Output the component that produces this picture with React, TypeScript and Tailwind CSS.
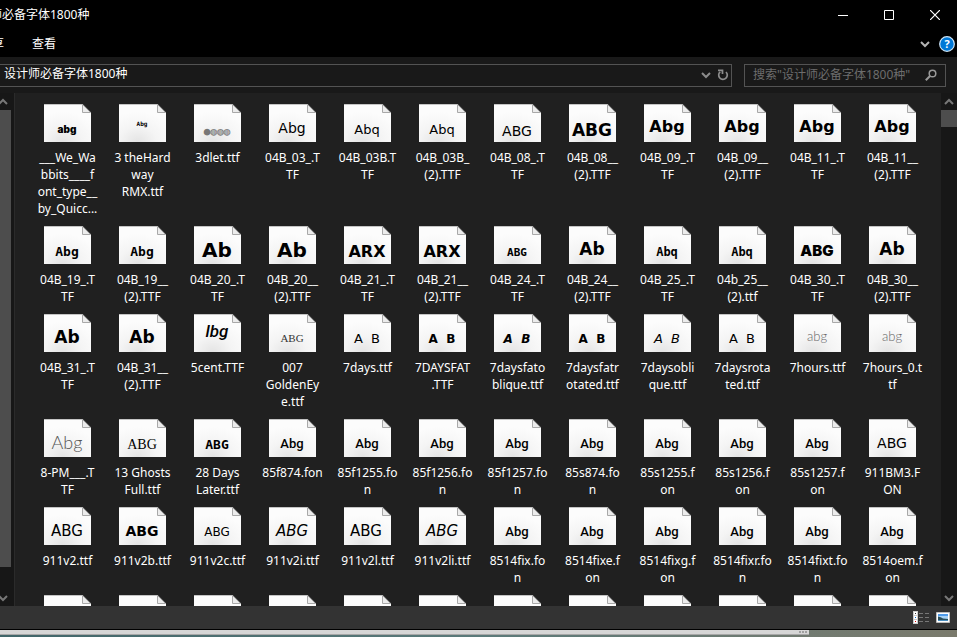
import { useState } from 'react';

const UI_FONT = "font-['Noto_Sans','Noto_Sans_CJK_SC',sans-serif]";

// typefaces used for the little previews
const FACES = {
    mono: { fontFamily: 'DejaVu Sans Mono', fontWeight: 700 },
    wide: { fontFamily: 'DejaVu Sans', fontWeight: 700 },
    extended: { fontFamily: 'DejaVu Sans', fontWeight: 400 },
    heavy: { fontFamily: 'Inter', fontWeight: 900 },
    fixed: { fontFamily: 'Roboto', fontWeight: 500 },
    thin: { fontFamily: 'Lato', fontWeight: 300 },
    serif: { fontFamily: 'Liberation Serif', fontWeight: 400 },
};

type Face = keyof typeof FACES;

interface Preview {
    text: string;
    face: Face;
    size: number;
    x?: number;
    y?: number;
    italic?: boolean;
    color?: string;
}

interface FontFile {
    name: string;
    preview?: Preview;
}

const p = (text: string, face: Face, size: number, rest: Partial<Preview> = {}): Preview => ({ text, face, size, ...rest });

const fixedAbg = p('Abg', 'fixed', 13);
const bold09 = p('Abg', 'wide', 16, { y: 28 });
const bold11 = p('Abg', 'wide', 16, { y: 28 });
const square31 = p('Ab', 'wide', 17, { y: 29 });
const v2Italic = p('ABG', 'extended', 15, { y: 29, italic: true });
const AB = 'A\u00a0\u00a0B';

// "\n" marks where the label wraps
const files: FontFile[] = [
    { name: '___We_Wa\nbbits____f\nont_type__\nby_Quicc...', preview: p('abg', 'heavy', 10, { x: 23, y: 29 }) },
    { name: '3 theHard\nway\nRMX.ttf', preview: p('Abg', 'mono', 6, { x: 23, y: 22 }) },
    { name: '3dlet.ttf', preview: p('●◍◍◍', 'mono', 11, { x: 23, y: 31, color: '#777' }) },
    { name: '04B_03_.T\nTF', preview: p('Abg', 'extended', 14, { x: 23, y: 29 }) },
    { name: '04B_03B.T\nTF', preview: p('Abq', 'extended', 13, { x: 23, y: 30 }) },
    { name: '04B_03B_\n(2).TTF', preview: p('Abq', 'extended', 13, { x: 23, y: 30 }) },
    { name: '04B_08_.T\nTF', preview: p('ABG', 'extended', 14, { x: 23, y: 32 }) },
    { name: '04B_08__\n(2).TTF', preview: p('ABG', 'wide', 17, { x: 23, y: 32 }) },
    { name: '04B_09_.T\nTF', preview: bold09 },
    { name: '04B_09__\n(2).TTF', preview: bold09 },
    { name: '04B_11_.T\nTF', preview: bold11 },
    { name: '04B_11__\n(2).TTF', preview: bold11 },

    { name: '04B_19_.T\nTF', preview: p('Abg', 'mono', 13, { x: 23, y: 30 }) },
    { name: '04B_19__\n(2).TTF', preview: p('Abg', 'mono', 13, { x: 23, y: 30 }) },
    { name: '04B_20_.T\nTF', preview: p('Ab', 'wide', 20, { x: 23, y: 31 }) },
    { name: '04B_20__\n(2).TTF', preview: p('Ab', 'wide', 20, { x: 23, y: 31 }) },
    { name: '04B_21_.T\nTF', preview: p('ARX', 'wide', 16, { y: 31 }) },
    { name: '04B_21__\n(2).TTF', preview: p('ARX', 'wide', 16, { y: 31 }) },
    { name: '04B_24_.T\nTF', preview: p('ABG', 'mono', 11, { x: 23, y: 30 }) },
    { name: '04B_24__\n(2).TTF', preview: square31 },
    { name: '04B_25_.T\nTF', preview: p('Abq', 'mono', 12, { x: 23, y: 30 }) },
    { name: '04b_25__\n(2).ttf', preview: p('Abq', 'mono', 12, { x: 23, y: 30 }) },
    { name: '04B_30_.T\nTF', preview: p('ABG', 'heavy', 15, { x: 23, y: 30 }) },
    { name: '04B_30__\n(2).TTF', preview: square31 },

    { name: '04B_31_.T\nTF', preview: square31 },
    { name: '04B_31__\n(2).TTF', preview: square31 },
    { name: '5cent.TTF', preview: p('lbg', 'fixed', 17, { y: 23, italic: true }) },
    { name: '007\nGoldenEy\ne.ttf', preview: p('ABG', 'serif', 11, { x: 23, y: 28, color: '#333' }) },
    { name: '7days.ttf', preview: p(AB, 'extended', 13, { y: 29 }) },
    { name: '7DAYSFAT\n.TTF', preview: p(AB, 'wide', 12, { y: 29 }) },
    { name: '7daysfato\nblique.ttf', preview: p(AB, 'wide', 12, { y: 29, italic: true }) },
    { name: '7daysfatr\notated.ttf', preview: p(AB, 'wide', 12, { y: 29 }) },
    { name: '7daysobli\nque.ttf', preview: p(AB, 'extended', 13, { y: 29, italic: true }) },
    { name: '7daysrota\nted.ttf', preview: p(AB, 'extended', 13, { y: 29 }) },
    { name: '7hours.ttf', preview: p('abg', 'thin', 13, { x: 23, y: 27, color: '#666' }) },
    { name: '7hours_0.t\ntf', preview: p('abg', 'thin', 13, { x: 23, y: 27, color: '#666' }) },

    { name: '8-PM___.T\nTF', preview: p('Abg', 'thin', 18, { x: 23, y: 30, color: '#555' }) },
    { name: '13 Ghosts\nFull.ttf', preview: p('ABG', 'serif', 14, { x: 23, y: 30 }) },
    { name: '28 Days\nLater.ttf', preview: p('ABG', 'mono', 13, { x: 23, y: 30 }) },
    { name: '85f874.fon', preview: fixedAbg },
    { name: '85f1255.fo\nn', preview: fixedAbg },
    { name: '85f1256.fo\nn', preview: fixedAbg },
    { name: '85f1257.fo\nn', preview: fixedAbg },
    { name: '85s874.fo\nn', preview: fixedAbg },
    { name: '85s1255.f\non', preview: fixedAbg },
    { name: '85s1256.f\non', preview: fixedAbg },
    { name: '85s1257.f\non', preview: fixedAbg },
    { name: '911BM3.F\nON', preview: p('ABG', 'extended', 14, { y: 29 }) },

    { name: '911v2.ttf', preview: p('ABG', 'extended', 15, { y: 29 }) },
    { name: '911v2b.ttf', preview: p('ABG', 'wide', 14, { y: 29 }) },
    { name: '911v2c.ttf', preview: p('ABG', 'extended', 12, { y: 29 }) },
    { name: '911v2i.ttf', preview: v2Italic },
    { name: '911v2l.ttf', preview: p('ABG', 'extended', 15, { x: 22, y: 29 }) },
    { name: '911v2li.ttf', preview: v2Italic },
    { name: '8514fix.fo\nn', preview: fixedAbg },
    { name: '8514fixe.f\non', preview: fixedAbg },
    { name: '8514fixg.f\non', preview: fixedAbg },
    { name: '8514fixr.fo\nn', preview: fixedAbg },
    { name: '8514fixt.fo\nn', preview: fixedAbg },
    { name: '8514oem.f\non', preview: fixedAbg },

    ...Array.from({ length: 12 }, () => ({ name: '' })),
];

function FileIcon({ preview }: { preview?: Preview }) {
    return (
        <svg width="47" height="38" viewBox="0 0 47 38" className="shrink-0" aria-hidden="true">
            <path d="M0 0H38.5L47 8.5V38H0Z" fill="url(#paper)" />
            <path d="M0 .5H38.5" stroke="#c4c4c4" />
            <path d="M38.5 .5L46.5 8.5H38.5Z" fill="#ececec" stroke="#a8a8a8" />
            {preview && (
                <text
                    x={preview.x ?? 23}
                    y={preview.y ?? 29}
                    textAnchor="middle"
                    fill={preview.color ?? '#000'}
                    fontSize={preview.size}
                    fontStyle={preview.italic ? 'italic' : 'normal'}
                    {...FACES[preview.face]}
                >
                    {preview.text}
                </text>
            )}
        </svg>
    );
}

function Chevron({ up = false, className = '' }: { up?: boolean; className?: string }) {
    return (
        <svg width="10" height="8" viewBox="0 0 10 8" fill="none" stroke="currentColor" strokeWidth="2" className={className} aria-hidden="true">
            <path d={up ? 'M1 6L5 2L9 6' : 'M1 2L5 6L9 2'} />
        </svg>
    );
}

function TitleBar() {
    return (
        <header className="flex h-[30px] items-center justify-between bg-black text-white">
            <h1 className="-ml-2.5 whitespace-nowrap text-xs">师必备字体1800种</h1>
            <div className="-mr-px flex h-full">
                <button aria-label="最小化" className="flex w-[46px] items-center justify-center">
                    <svg width="10" height="10" viewBox="0 0 10 10" stroke="currentColor"><path d="M0 5.5H10" /></svg>
                </button>
                <button aria-label="最大化" className="flex w-[46px] items-center justify-center">
                    <svg width="10" height="10" viewBox="0 0 10 10" fill="none" stroke="currentColor"><path d="M.5 .5H9.5V9.5H.5Z" /></svg>
                </button>
                <button aria-label="关闭" className="flex w-[46px] items-center justify-center">
                    <svg width="10" height="10" viewBox="0 0 10 10" stroke="currentColor" strokeWidth="1.2"><path d="M0 0L10 10M10 0L0 10" /></svg>
                </button>
            </div>
        </header>
    );
}

function RibbonTabs() {
    return (
        <nav className="flex h-[27px] items-center justify-between bg-black text-xs text-white">
            <div className="-ml-5 flex gap-7">
                <button>共享</button>
                <button>查看</button>
            </div>
            <div className="flex items-center gap-[9px] pr-0.5">
                <button aria-label="展开功能区" className="text-[#b4b4b4]">
                    <Chevron />
                </button>
                <button aria-label="帮助">
                    <svg width="16" height="16" viewBox="0 0 16 16">
                        <circle cx="8" cy="8" r="7.3" fill="#0078d7" stroke="#cfe6f8" strokeWidth="1.2" />
                        <text x="8" y="12" textAnchor="middle" fill="#fff" fontSize="11" fontWeight="700" fontFamily="Open Sans">?</text>
                    </svg>
                </button>
            </div>
        </nav>
    );
}

function AddressBar() {
    const [query, setQuery] = useState('');
    return (
        <div className="flex h-9 items-center gap-3 bg-[#191919] pr-[11px] text-xs">
            <div className="flex h-[23px] flex-1 items-center justify-between border border-l-0 border-[#535353] pl-1 pr-0.5">
                <span className="whitespace-nowrap pb-0.5 text-white">设计师必备字体1800种</span>
                <div className="flex items-center gap-1.5 text-[#8c8c8c]">
                    <button aria-label="以前的位置"><Chevron /></button>
                    <button aria-label="刷新">
                        <svg width="12" height="12" viewBox="0 0 12 12" fill="none" stroke="currentColor" strokeWidth="1.7">
                            <path d="M9 3A4.3 4.3 0 1 1 3.2 2.8" />
                            <path d="M5.5 5V1.3H1" />
                        </svg>
                    </button>
                </div>
            </div>
            <div className="flex h-[23px] w-[202px] items-center border border-[#535353] px-2">
                <input
                    aria-label="搜索"
                    value={query}
                    onChange={(e) => setQuery(e.target.value)}
                    placeholder={'搜索"设计师必备字体1800种"'}
                    className="min-w-0 flex-1 bg-transparent text-white outline-none placeholder:text-[#6d6d6d]"
                />
                <button aria-label="开始搜索" className="text-[#9a9a9a]">
                    <svg width="12" height="12" viewBox="0 0 12 12" fill="none" stroke="currentColor">
                        <circle cx="7.5" cy="4.5" r="3.3" strokeWidth="1.5" />
                        <path d="M5 7L.8 11.2" strokeWidth="2" />
                    </svg>
                </button>
            </div>
        </div>
    );
}

function StatusBar() {
    return (
        <footer className="flex h-[23px] shrink-0 items-center justify-end gap-[7px] bg-[#333] pr-[7px]">
            <button aria-label="详细信息">
                <svg width="16" height="13" viewBox="0 0 16 13">
                    <path d="M0 0H5V13H0Z" fill="#ccc" />
                    <path d="M1 1H4V4H1ZM1 5H4V8H1ZM1 9H4V12H1Z" fill="#fff" />
                    <path d="M2 2H3V3H2Z" fill="#333" />
                    <path d="M2 6H3V7H2Z" fill="#06c" />
                    <path d="M2 10H3V11H2Z" fill="#d00" />
                    <path d="M6 2.5H10M12 2.5H16M6 6.5H10M12 6.5H16M6 10.5H10M12 10.5H16" stroke="#777" />
                </svg>
            </button>
            <button aria-label="大图标">
                <svg width="14" height="11" viewBox="0 0 14 11">
                    <path d="M.5 .5H13.5V10.5H.5Z" fill="#fff" stroke="#bdbdbd" />
                    <path d="M2 2H12V9H2Z" fill="#a9d3f5" />
                    <path d="M2 2H12V4H2Z" fill="#4f9bea" />
                    <path d="M2 4.5Q5 5 7 6.5L12 7V8H2Z" fill="#2a4f5c" />
                    <path d="M2 8H12V9H2Z" fill="#4b8fc0" />
                </svg>
            </button>
        </footer>
    );
}

export default function App() {
    return (
        <div className={`flex h-screen flex-col overflow-hidden bg-[#202020] ${UI_FONT}`}>
            <svg width="0" height="0" className="absolute" aria-hidden="true">
                <defs>
                    <radialGradient id="paper" cx=".4" cy="1" r=".8">
                        <stop offset="0" stopColor="#e4e4e4" />
                        <stop offset=".5" stopColor="#f4f4f4" />
                        <stop offset="1" stopColor="#fcfcfc" />
                    </radialGradient>
                </defs>
            </svg>

            <TitleBar />
            <RibbonTabs />
            <AddressBar />

            <div className="flex min-h-0 flex-1">
                {/* navigation pane scrollbar */}
                <div className="flex w-[15px] shrink-0 flex-col border-r border-[#2b2b2b] bg-[#171717] text-[#777]">
                    <button aria-label="向上滚动" className="flex h-[17px] shrink-0 items-center"><Chevron up className="-ml-0.5" /></button>
                    <div className="mr-[3px] flex-1 bg-[#4d4d4d]" />
                    <button aria-label="向下滚动" className="flex h-[39px] shrink-0 items-end pb-1"><Chevron className="-ml-0.5" /></button>
                </div>

                <main className="min-w-0 flex-1 overflow-hidden pl-[15px] pt-[11px]">
                    <ul className="grid grid-cols-[repeat(auto-fill,75px)] gap-y-[9px]">
                        {files.map((file, i) => (
                            <li key={i} className="flex flex-col items-center gap-[7px]">
                                <FileIcon preview={file.preview} />
                                <span className="whitespace-pre text-center text-xs/[17px] text-white">{file.name}</span>
                            </li>
                        ))}
                    </ul>
                </main>

                <div className="flex w-4 shrink-0 flex-col items-center bg-[#171717] text-[#777]">
                    <button aria-label="向上滚动" className="flex h-[17px] items-center"><Chevron up /></button>
                    <div className="h-[17px] w-full bg-[#4d4d4d]" />
                    <button aria-label="向下滚动" className="mt-auto flex h-[17px] items-center"><Chevron /></button>
                </div>
            </div>

            <StatusBar />

            {/* what shows of the desktop under the window */}
            <div className="h-2 shrink-0 border-t border-black bg-gradient-to-r from-[#41666a] via-[#5b7a7a] to-[#7a7a6c]">
                <div className="flex h-[5px] w-[84.5%] items-center justify-end gap-px border-b border-[#a8a8a8] bg-[#d6d6d6] pr-0.5">
                    <i className="size-0.5 bg-[#a0a0a0]" />
                    <i className="size-0.5 bg-[#a0a0a0]" />
                    <i className="size-0.5 bg-[#a0a0a0]" />
                </div>
            </div>
        </div>
    );
}
